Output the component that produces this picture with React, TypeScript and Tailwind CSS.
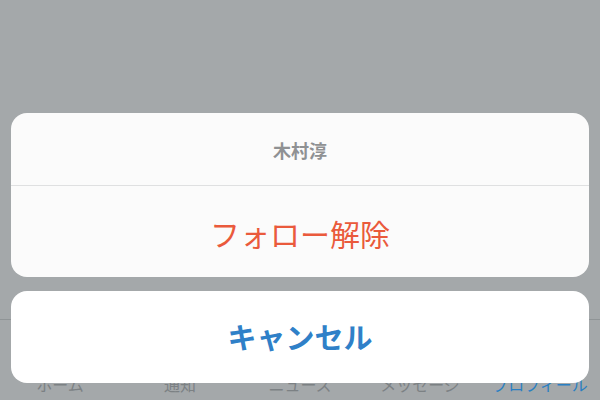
const tabs = [
    { label: "ホーム", active: false },
    { label: "通知", active: false },
    { label: "ニュース", active: false },
    { label: "メッセージ", active: false },
    { label: "プロフィール", active: true },
]

const App = () => {
    return (
        <div
            className="relative w-[600px] h-[400px] overflow-hidden bg-[#a4a8aa]"
            style={{ fontFamily: '"Noto Sans CJK JP", "Noto Sans", sans-serif' }}
        >
            {/* page behind the dimmed overlay */}
            <div className="flex flex-col h-full">
                <div className="flex-1" />
                <div className="h-[81px] border-t border-[#8f9496] flex items-end pb-[6px]">
                    {tabs.map((t) => (
                        <div
                            key={t.label}
                            className={
                                "flex-1 text-center text-[16px] leading-[20px] " +
                                (t.active ? "text-[#2a7fc2]" : "text-[#7c8184]")
                            }
                        >
                            {t.label}
                        </div>
                    ))}
                </div>
            </div>

            {/* action sheet */}
            <div className="absolute inset-0 flex flex-col justify-end gap-[14px] px-[11px] pb-[17px]">
                <div className="flex flex-col rounded-[16px] bg-[#fbfbfb] overflow-hidden">
                    <div className="h-[72px] flex items-center justify-center pt-[2px] text-[18px] font-bold text-[#8f9193]">
                        木村淳
                    </div>
                    <div className="h-px bg-[#dfe0e1]" />
                    <div className="h-[91px] flex items-center justify-center pt-[4px] text-[30px] text-[#ea5a3c]">
                        フォロー解除
                    </div>
                </div>
                <div className="h-[92px] rounded-[16px] bg-white flex items-center justify-center text-[29px] font-bold text-[#2f80c8]">
                    キャンセル
                </div>
            </div>
        </div>
    )
}

export default App
